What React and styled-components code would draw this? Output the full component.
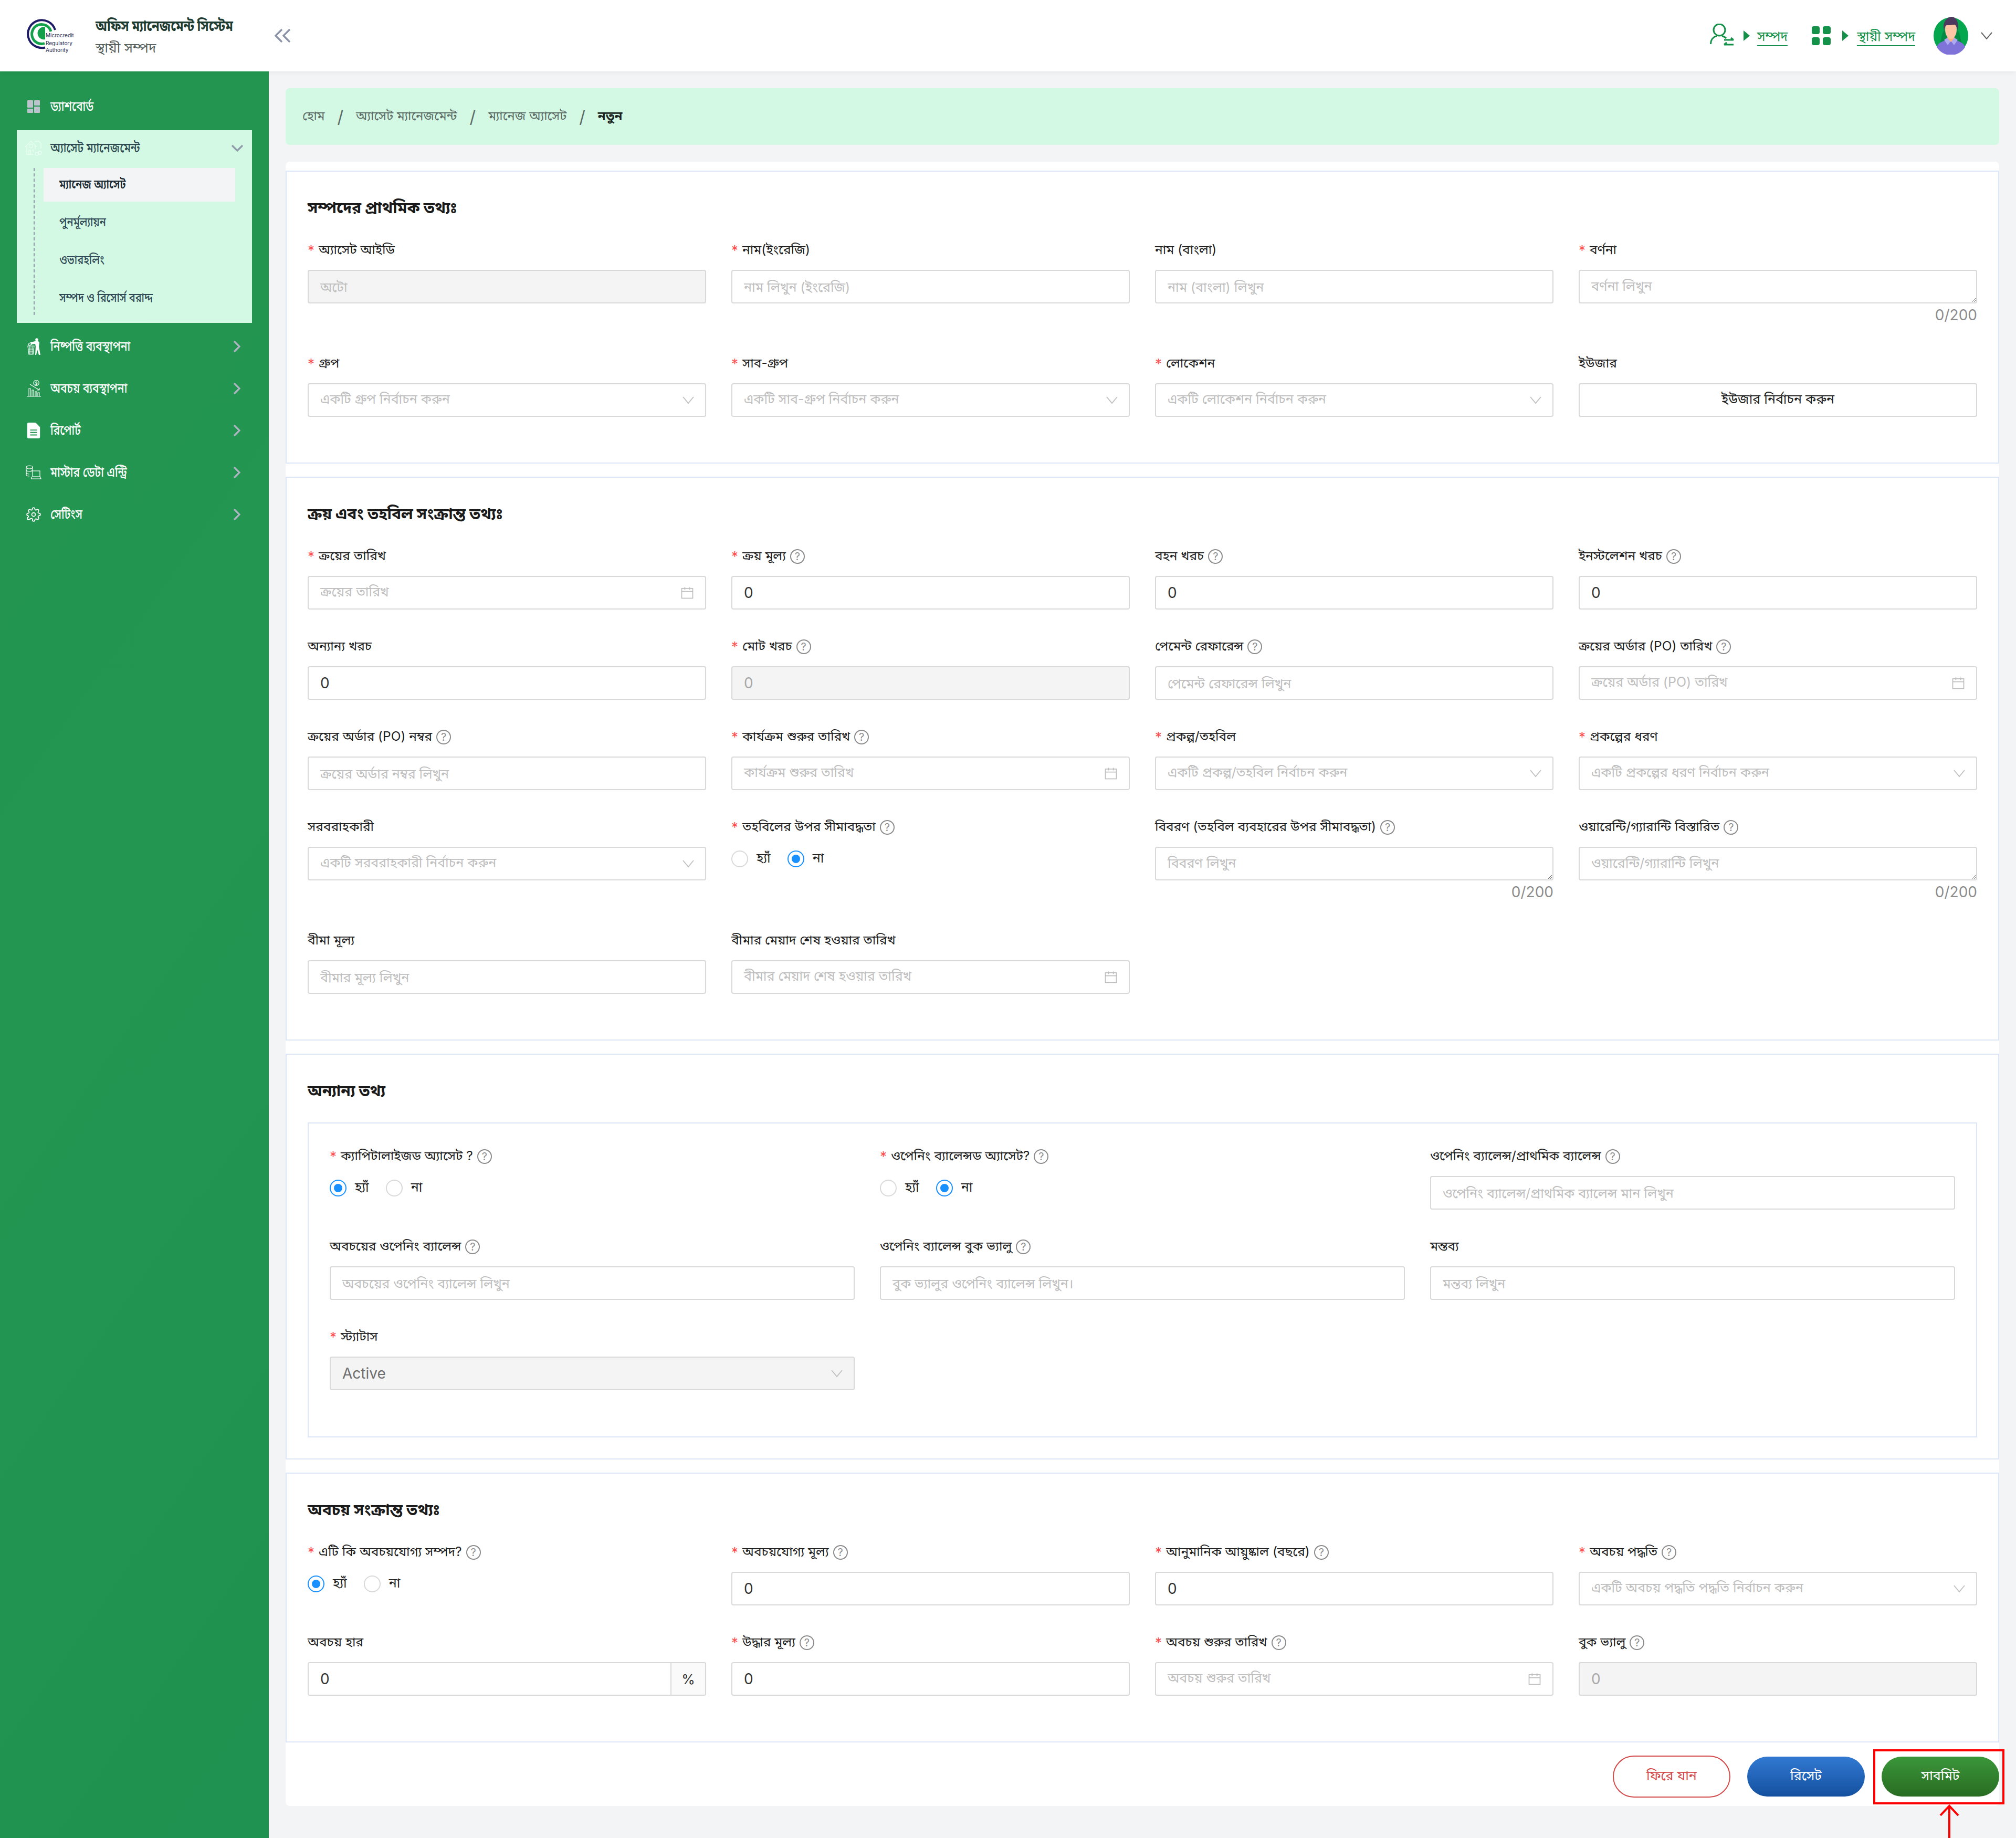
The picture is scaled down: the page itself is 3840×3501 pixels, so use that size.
import React from 'react';
import styled, { createGlobalStyle } from 'styled-components';

const Global = createGlobalStyle`
  html, body { margin: 0; padding: 0; }
  body { background: #f2f4f6; font-family: "Inter", "Noto Sans Bengali", "Noto Sans", sans-serif; }
  * { box-sizing: border-box; }
`;
const Shell = styled.div`
  width: 3840px; height: 3501px; display: flex; flex-direction: column; background: #f2f4f6; overflow: hidden; position: relative;
`;
const Header = styled.header`
  height: 136px; flex: none; background: #fff; display: flex; align-items: center; padding: 0 45px 0 48px;
  box-shadow: 0 2px 8px rgba(0,0,0,.06); position: relative; z-index: 2;
`;
const Brand = styled.div`
  display: flex; flex-direction: column; margin-left: 42px; width: 342px;
`;
const Narrow = styled.span`
  display: inline-block; white-space: nowrap; transform: scaleX(${p => p.$x}); transform-origin: 0 50%;
`;
const BrandTitle = styled.div`
  font-size: 29px; line-height: 44px; color: #1d3b30; font-weight: 700; white-space: nowrap; padding-top: 2px;
`;
const BrandSub = styled.div`
  font-size: 26px; line-height: 40px; color: #55605c; white-space: nowrap;
`;
const Spacer = styled.div`flex: 1;`;
const TopLink = styled.a`
  font-size: 25px; line-height: 34px; padding-top: 4px; color: #15924a; border-bottom: 2px solid #15924a; white-space: nowrap; margin-left: ${p => p.$ml}px;
`;
const TopGroup = styled.div`
  display: flex; align-items: center; margin-right: ${p => p.$mr || 0}px;
`;
const Caret = styled.span`
  width: 0; height: 0; border-top: 10px solid transparent; border-bottom: 10px solid transparent; border-left: 12px solid #15924a; margin-left: ${p => p.$ml}px;
`;
const Body = styled.div`flex: 1; display: flex; min-height: 0;`;
const Side = styled.aside`
  width: 512px; flex: none; padding: 35px 32px 0;
  background: linear-gradient(125deg, #239550 0%, #239652 50%, #1f9150 100%);
`;
const MenuItem = styled.div`
  height: 64px; display: flex; align-items: center; color: ${p => p.$dark ? '#2d4a50' : '#fff'}; font-size: 26px; font-weight: 500;
  margin-bottom: ${p => p.$mb ?? 16}px; padding-right: 16px;
`;
const MenuIcon = styled.span`
  width: 64px; flex: none; display: flex; justify-content: center; align-items: center;
`;
const MenuText = styled.span`
  flex: 1; white-space: nowrap; padding-top: 2px; transform: scaleX(.81); transform-origin: 0 50%;
`;
const SubBox = styled.div`
  background: #d3f8e3; padding: 2px 0 15px; margin-bottom: 13px;
`;
const SubList = styled.div`
  margin: 6px 32px 0 32px; padding-left: 17px; border-left: 2px dashed #8c9aa6; display: flex; flex-direction: column; gap: 8px;
`;
const SubItem = styled.div`
  height: 64px; display: flex; align-items: center; padding-left: 30px; font-size: 24px; font-weight: ${p => p.$active ? 600 : 500};
  color: ${p => p.$active ? '#1b2a33' : '#2f4a55'}; background: ${p => p.$active ? '#f2f4f6' : 'transparent'}; white-space: nowrap;
`;
const Main = styled.main`flex: 1; min-width: 0; padding: 32px 32px 0;`;
const Crumbs = styled.nav`
  height: 108px; background: #d3f8e3; border-radius: 8px; display: flex; align-items: center; padding: 0 32px; margin-bottom: 32px;
  font-size: 24px; color: #5c6b66; white-space: nowrap;
`;
const CrumbSep = styled.span`margin: 0 24px; font: 32px "Inter", sans-serif; color: #5c6b66;`;
const CrumbNow = styled.span`color: #1b2421; font-weight: 700;`;
const Sheet = styled.div`
  background: #fff; border-radius: 8px; padding-top: 17px; height: 3132px; display: flex; flex-direction: column; gap: 25px;
`;
const Section = styled.section`
  border: 2px solid #dce6f6; padding: ${p => p.$top || 127}px 40px 39px; position: relative; background: #fff;
`;
const SectionTitle = styled.h2`
  position: absolute; left: 40px; top: 44px; margin: 0; font-size: 30px; line-height: 48px; font-weight: 700; color: #1a1a1a; white-space: nowrap;
`;
const Grid = styled.div`
  display: grid; grid-template-columns: repeat(${p => p.$cols || 4}, 1fr); column-gap: 48px; align-items: start;
`;
const Panel = styled.div`
  border: 2px solid #dce6f6; padding: 40px; margin-bottom: 1px;
`;
const Field = styled.div`margin-bottom: 48px; min-width: 0;`;
const Label = styled.label`
  display: flex; align-items: center; height: 46px; margin-bottom: 14px; font-size: 24.5px; color: #1f1f1f; white-space: nowrap;
`;
const Req = styled.span`
  color: #ff4d4f; font-family: "Inter", sans-serif; font-size: 26px; margin-right: 8px; line-height: 1;
`;
const Help = styled.span`
  width: 28px; height: 28px; border: 2px solid #8c8c8c; border-radius: 50%; color: #8c8c8c; font: 20px/24px "Inter", sans-serif; text-align: center; margin-left: 8px; flex: none;
`;
const TextInput = styled.input`
  display: block; width: 100%; height: 64px; border: 2px solid #d9d9d9; border-radius: 4px; padding: 0 22px; font: 28px "Inter", "Noto Sans Bengali", sans-serif; color: #333;
  background: ${p => p.$off ? '#f4f4f4' : '#fff'}; outline: none;
  &::placeholder { color: #bfbfbf; font-size: 25px; opacity: 1; }
  &:disabled { color: #a8a8a8; }
`;
const Area = styled.textarea`
  display: block; width: 100%; height: 64px; border: 2px solid #d9d9d9; border-radius: 4px; padding: 14px 22px 0; font: 25px "Inter", "Noto Sans Bengali", sans-serif; resize: vertical; background: #fff; outline: none;
  &::placeholder { color: #bfbfbf; opacity: 1; }
`;
const Count = styled.div`
  height: 44px; text-align: right; font: 28px/44px "Inter", sans-serif; color: #8c8c8c;
`;
const Box = styled.div`
  height: 64px; border: 2px solid #d9d9d9; border-radius: 4px; display: flex; align-items: center; padding: 0 20px 0 22px; justify-content: space-between;
  background: ${p => p.$off ? '#f4f4f4' : '#fff'};
`;
const Ph = styled.span`
  color: ${p => p.$strong ? '#6e6e6e' : '#bfbfbf'}; font-size: ${p => p.$strong ? 28 : 25}px; white-space: nowrap;
`;
const UserBtn = styled.div`
  height: 64px; border: 2px solid #d9d9d9; border-radius: 4px; display: flex; align-items: center; justify-content: center; font-size: 25px; color: #222; background: #fff;
`;
const AddOn = styled.div`
  display: flex; height: 64px; border: 2px solid #d9d9d9; border-radius: 4px; overflow: hidden;
`;
const AddOnInput = styled.input`
  flex: 1; min-width: 0; border: 0; padding: 0 22px; font: 28px "Inter", sans-serif; color: #333; outline: none;
`;
const AddOnTail = styled.div`
  width: 66px; border-left: 2px solid #d9d9d9; background: #fafafa; display: flex; align-items: center; justify-content: center; font: 26px "Inter", sans-serif; color: #333;
`;
const Radios = styled.div`display: flex; align-items: center; height: 32px; margin-top: 21px;`;
const RadioDot = styled.span`
  width: 32px; height: 32px; border-radius: 50%; border: 2px solid ${p => p.$on ? '#1890ff' : '#d9d9d9'}; display: flex; align-items: center; justify-content: center; flex: none;
  &::after { content: ''; width: 16px; height: 16px; border-radius: 50%; background: ${p => p.$on ? '#1890ff' : 'transparent'}; }
`;
const RadioText = styled.span`font-size: 25px; color: #222; margin: 0 32px 0 16px; white-space: nowrap;`;
const Foot = styled.div`
  flex: 1; display: flex; align-items: center; justify-content: flex-end; gap: 32px; padding-bottom: 16px;
`;
const Pill = styled.button`
  width: 224px; height: ${p => p.$v === 'back' ? 80 : 76}px; border-radius: 40px; border: ${p => p.$v === 'back' ? '2px solid #d24a4a' : 0}; font: 25px "Inter", "Noto Sans Bengali", sans-serif;
  color: ${p => p.$v === 'back' ? '#d24a4a' : '#fff'};
  background: ${p => p.$v === 'back' ? '#fff' : p.$v === 'reset' ? 'linear-gradient(180deg,#3179d2,#14509f)' : 'linear-gradient(180deg,#3a963a,#296c22)'};
`;
const Mark = styled.div`
  position: absolute; left: 3568px; top: 3332px; width: 250px; height: 105px; border: 4px solid #ff0000; z-index: 5;
`;
const Arrow = styled.svg`position: absolute; left: 3690px; top: 3436px; z-index: 5;`;
const ChevWrap = styled.span`margin-left: 24px; display: flex;`;

const Chev = () => (
  <svg width="24" height="16" viewBox="0 0 24 16" fill="none" stroke="#bfbfbf" strokeWidth="1.8"><path d="M2 2l10 12L22 2" /></svg>
);
const Cal = () => (
  <svg width="28" height="28" viewBox="0 0 24 24" fill="none" stroke="#bfbfbf" strokeWidth="1.5"><rect x="3" y="5" width="18" height="16" /><path d="M3 10h18M8 3v4M16 3v4" /></svg>
);
const Logo = () => (
  <svg width="92" height="66" viewBox="0 0 92 66" style={{ flex: 'none' }}>
    <path d="M57 22A26.5 26.5 0 1 0 38 55.5" fill="none" stroke="#1d1a66" strokeWidth="4" />
    <path d="M49 25A18.5 18.5 0 1 0 37 47.5" fill="none" stroke="#13a04b" strokeWidth="5" />
    <path d="M38 16.5A12 12 0 1 0 38 40Z" fill="#13a04b" />
    <text x="39" y="36" fontFamily="Inter, sans-serif" fontSize="10" fill="#1d2a4f">Microcredit</text>
    <text x="39" y="51" fontFamily="Inter, sans-serif" fontSize="10" fill="#1d2a4f">Regulatory</text>
    <text x="39" y="64" fontFamily="Inter, sans-serif" fontSize="10" fill="#1d2a4f">Authority</text>
  </svg>
);
const Dash = () => (
  <svg width="24" height="24" viewBox="0 0 24 24" fill="#bcc3cc"><rect width="11" height="14" rx="1" /><rect x="13" width="11" height="10" rx="1" /><rect y="16" width="11" height="8" rx="1" /><rect x="13" y="12" width="11" height="12" rx="1" /></svg>
);
const Estate = () => (
  <svg width="32" height="30" viewBox="0 0 32 30" fill="none" stroke="#eafff3" strokeWidth="1.3"><path d="M0 13L11 2l11 11" /><path d="M3 12v15h12M19 10v7" /><circle cx="11" cy="11" r="3.5" /><path d="M7 19h3v8H7zM13 19h3v4" /><path d="M18 2h8l4 4v10" /><circle cx="22" cy="26" r="3" /><circle cx="28" cy="24" r="3" /></svg>
);
const Trash = () => (
  <svg width="25" height="32" viewBox="0 0 25 32" fill="#fff">
    <circle cx="18" cy="3" r="2.8" />
    <path d="M6 8l9-2h6l2 3-1 7 3 16h-3l-3-10-2 10h-2l1-16-1-5-8 1z" />
    <path d="M1 15h12l-2 16H3z" fill="none" stroke="#fff" strokeWidth="1.2" />
    <path d="M4.5 16v14M7 16v14M9.5 16v14M2 21h10M2.5 26h9" stroke="#fff" strokeWidth=".8" />
    <ellipse cx="6" cy="11" rx="4" ry="2" transform="rotate(-25 6 11)" fill="none" stroke="#fff" strokeWidth="1.2" />
  </svg>
);
const Decline = () => (
  <svg width="27" height="32" viewBox="0 0 27 32" fill="none" stroke="#fff" strokeWidth="1.1">
    <circle cx="18" cy="5.5" r="5.2" />
    <text x="18" y="8.5" textAnchor="middle" fontFamily="Inter, sans-serif" fontSize="8" fill="#fff" stroke="none">$</text>
    <path d="M6 8l18 11M24 19v-4M24 19h-4M0 31h27M4 31V16h3v15M10 31V19h3v12M16 31V22h3v9M21 31V24h3v7" />
  </svg>
);
const Doc = () => (
  <svg width="26" height="30" viewBox="0 0 26 32"><path d="M3 0h14l9 9v20a3 3 0 0 1-3 3H3a3 3 0 0 1-3-3V3a3 3 0 0 1 3-3z" fill="#fff" /><path d="M6 15h14M6 20h14M6 25h14" stroke="#239550" strokeWidth="2" /></svg>
);
const Master = () => (
  <svg width="32" height="28" viewBox="0 0 32 28" fill="none" stroke="#fff" strokeWidth="1.2"><ellipse cx="8" cy="4" rx="6" ry="3" /><path d="M2 4v14c0 2 3 3 6 3M14 4v6M2 9c0 2 3 3 6 3s5-1 6-2M2 14c0 2 3 3 6 3" /><rect x="14" y="11" width="14" height="11" /><path d="M11 26h20M12 22v4M29 22v4" /></svg>
);
const Gear = () => (
  <svg width="28" height="28" viewBox="0 0 24 24" fill="none" stroke="#fff" strokeWidth="1.5" strokeLinejoin="round"><circle cx="12" cy="12" r="3" /><path d="M19.4 15a1.65 1.65 0 0 0 .33 1.82l.06.06a2 2 0 1 1-2.83 2.83l-.06-.06a1.65 1.65 0 0 0-2.82 1.17V21a2 2 0 0 1-4 0v-.09A1.65 1.65 0 0 0 7 19.4a1.65 1.65 0 0 0-1.82.33l-.06.06a2 2 0 1 1-2.83-2.83l.06-.06A1.65 1.65 0 0 0 3.09 14H3a2 2 0 0 1 0-4h.09A1.65 1.65 0 0 0 4.6 9a1.65 1.65 0 0 0-.33-1.82l-.06-.06a2 2 0 1 1 2.83-2.83l.06.06A1.65 1.65 0 0 0 9 4.6 1.65 1.65 0 0 0 10 3.09V3a2 2 0 0 1 4 0v.09a1.65 1.65 0 0 0 1 1.51 1.65 1.65 0 0 0 1.82-.33l.06-.06a2 2 0 1 1 2.83 2.83l-.06.06A1.65 1.65 0 0 0 19.4 9a1.65 1.65 0 0 0 1.51 1H21a2 2 0 0 1 0 4h-.09a1.65 1.65 0 0 0-1.51 1z" /></svg>
);
const SideChev = ({ open }) => (
  <svg width="24" height="24" viewBox="0 0 24 24" fill="none" stroke={open ? '#8f9bab' : '#aeb4c2'} strokeWidth="3.2"><path d={open ? 'M2 7l10 10L22 7' : 'M6 2l10 10L6 22'} /></svg>
);
const Avatar = () => (
  <svg width="66" height="72" viewBox="0 0 66 72" style={{ flex: 'none' }}>
    <ellipse cx="33" cy="36" rx="33" ry="35" fill="#04a64e" />
    <path d="M12 50c4-8 2-16 8-24h26c6 8 4 16 8 24l-8 6H20z" fill="#058a44" />
    <path d="M6 58c2-9 12-12 27-16 15 4 25 7 27 16a33 35 0 0 1-54 0z" fill="#7f72d8" />
    <path d="M26 40l-6 4 7 10 6-8 6 8 7-10-6-4z" fill="#aeaaf2" />
    <path d="M26 40l7 8 7-8-3-8H29z" fill="#ffb27f" />
    <ellipse cx="33" cy="24" rx="11" ry="18" fill="#ffc6a6" />
    <path d="M20 26C16 10 26 0 34 0s15 8 12 26c-2-6-3-10-6-11-6 1-12 1-15 1-3 1-4 5-5 10z" fill="#4d3a5e" />
  </svg>
);

const Fld = ({ label, req, help, children }) => (
  <Field>
    <Label>{req && <Req>*</Req>}{label}{help && <Help>?</Help>}</Label>
    {children}
  </Field>
);
const Sel = ({ ph }) => <Box><Ph>{ph}</Ph><Chev /></Box>;
const DateF = ({ ph }) => <Box><Ph>{ph}</Ph><Cal /></Box>;
const Yn = ({ yes }) => (
  <Radios>
    <RadioDot $on={yes} /><RadioText>হ্যাঁ</RadioText>
    <RadioDot $on={!yes} /><RadioText>না</RadioText>
  </Radios>
);

export default function App() {
  return (
    <Shell>
      <Global />
      <Header>
        <Logo />
        <Brand>
          <BrandTitle><Narrow $x={0.82}>অফিস ম্যানেজমেন্ট সিস্টেম</Narrow></BrandTitle>
          <BrandSub>স্থায়ী সম্পদ</BrandSub>
        </Brand>
        <svg width="33" height="30" viewBox="0 0 33 30" fill="none" stroke="#8a92a6" strokeWidth="3.4" style={{ marginLeft: -2 }}><path d="M15 3L3 15l12 12M30 3L18 15l12 12" /></svg>
        <Spacer />
        <TopGroup $mr={46}>
          <svg width="46" height="46" viewBox="0 0 46 46" fill="none" stroke="#15924a" strokeWidth="3"><circle cx="18" cy="12" r="11" /><path d="M1.5 39C1.5 30 7 25 13 23.5M23 23.5c3 1 6 2 8 4.5" /><path d="M27 31h18M40 27l5 4M27 40h18M32 36l-5 4" /></svg>
          <Caret $ml={18} />
          <TopLink $ml={14}>সম্পদ</TopLink>
        </TopGroup>
        <TopGroup $mr={35}>
          <svg width="36" height="36" viewBox="0 0 36 36" fill="#15924a"><rect width="15" height="15" rx="4" /><rect x="21" width="15" height="15" rx="4" /><rect y="21" width="15" height="15" rx="4" /><rect x="21" y="21" width="15" height="15" rx="4" /></svg>
          <Caret $ml={22} />
          <TopLink $ml={16}>স্থায়ী সম্পদ</TopLink>
        </TopGroup>
        <Avatar />
        <ChevWrap><svg width="22" height="14" viewBox="0 0 22 14" fill="none" stroke="#666" strokeWidth="2"><path d="M1 1l10 12L21 1" /></svg></ChevWrap>
      </Header>
      <Body>
        <Side>
          <MenuItem $mb={13}><MenuIcon><Dash /></MenuIcon><MenuText>ড্যাশবোর্ড</MenuText></MenuItem>
          <SubBox>
            <MenuItem $dark $mb={0}><MenuIcon><Estate /></MenuIcon><MenuText>অ্যাসেট ম্যানেজমেন্ট</MenuText><SideChev open /></MenuItem>
            <SubList>
              <SubItem $active><Narrow $x={0.83}>ম্যানেজ অ্যাসেট</Narrow></SubItem>
              <SubItem><Narrow $x={0.83}>পুনর্মূল্যায়ন</Narrow></SubItem>
              <SubItem><Narrow $x={0.83}>ওভারহলিং</Narrow></SubItem>
              <SubItem><Narrow $x={0.83}>সম্পদ ও রিসোর্স বরাদ্দ</Narrow></SubItem>
            </SubList>
          </SubBox>
          <MenuItem><MenuIcon><Trash /></MenuIcon><MenuText>নিষ্পত্তি ব্যবস্থাপনা</MenuText><SideChev /></MenuItem>
          <MenuItem><MenuIcon><Decline /></MenuIcon><MenuText>অবচয় ব্যবস্থাপনা</MenuText><SideChev /></MenuItem>
          <MenuItem><MenuIcon><Doc /></MenuIcon><MenuText>রিপোর্ট</MenuText><SideChev /></MenuItem>
          <MenuItem><MenuIcon><Master /></MenuIcon><MenuText>মাস্টার ডেটা এন্ট্রি</MenuText><SideChev /></MenuItem>
          <MenuItem><MenuIcon><Gear /></MenuIcon><MenuText>সেটিংস</MenuText><SideChev /></MenuItem>
        </Side>
        <Main>
          <Crumbs>
            <span>হোম</span><CrumbSep>/</CrumbSep>
            <span>অ্যাসেট ম্যানেজমেন্ট</span><CrumbSep>/</CrumbSep>
            <span>ম্যানেজ অ্যাসেট</span><CrumbSep>/</CrumbSep>
            <CrumbNow>নতুন</CrumbNow>
          </Crumbs>
          <Sheet>
            <Section>
              <SectionTitle>সম্পদের প্রাথমিক তথ্যঃ</SectionTitle>
              <Grid>
                <Fld req label="অ্যাসেট আইডি"><TextInput $off disabled placeholder="অটো" /></Fld>
                <Fld req label="নাম(ইংরেজি)"><TextInput placeholder="নাম লিখুন (ইংরেজি)" /></Fld>
                <Fld label="নাম (বাংলা)"><TextInput placeholder="নাম (বাংলা) লিখুন" /></Fld>
                <Fld req label="বর্ণনা"><Area placeholder="বর্ণনা লিখুন" /><Count>0/200</Count></Fld>
                <Fld req label="গ্রুপ"><Sel ph="একটি গ্রুপ নির্বাচন করুন" /></Fld>
                <Fld req label="সাব-গ্রুপ"><Sel ph="একটি সাব-গ্রুপ নির্বাচন করুন" /></Fld>
                <Fld req label="লোকেশন"><Sel ph="একটি লোকেশন নির্বাচন করুন" /></Fld>
                <Fld label="ইউজার"><UserBtn>ইউজার নির্বাচন করুন</UserBtn></Fld>
              </Grid>
            </Section>
            <Section>
              <SectionTitle>ক্রয় এবং তহবিল সংক্রান্ত তথ্যঃ</SectionTitle>
              <Grid>
                <Fld req label="ক্রয়ের তারিখ"><DateF ph="ক্রয়ের তারিখ" /></Fld>
                <Fld req help label="ক্রয় মূল্য"><TextInput defaultValue="0" /></Fld>
                <Fld help label="বহন খরচ"><TextInput defaultValue="0" /></Fld>
                <Fld help label="ইনস্টলেশন খরচ"><TextInput defaultValue="0" /></Fld>
                <Fld label="অন্যান্য খরচ"><TextInput defaultValue="0" /></Fld>
                <Fld req help label="মোট খরচ"><TextInput $off disabled defaultValue="0" /></Fld>
                <Fld help label="পেমেন্ট রেফারেন্স"><TextInput placeholder="পেমেন্ট রেফারেন্স লিখুন" /></Fld>
                <Fld help label="ক্রয়ের অর্ডার (PO) তারিখ"><DateF ph="ক্রয়ের অর্ডার (PO) তারিখ" /></Fld>
                <Fld help label="ক্রয়ের অর্ডার (PO) নম্বর"><TextInput placeholder="ক্রয়ের অর্ডার নম্বর লিখুন" /></Fld>
                <Fld req help label="কার্যক্রম শুরুর তারিখ"><DateF ph="কার্যক্রম শুরুর তারিখ" /></Fld>
                <Fld req label="প্রকল্প/তহবিল"><Sel ph="একটি প্রকল্প/তহবিল নির্বাচন করুন" /></Fld>
                <Fld req label="প্রকল্পের ধরণ"><Sel ph="একটি প্রকল্পের ধরণ নির্বাচন করুন" /></Fld>
                <Fld label="সরবরাহকারী"><Sel ph="একটি সরবরাহকারী নির্বাচন করুন" /></Fld>
                <Fld req help label="তহবিলের উপর সীমাবদ্ধতা"><Yn /></Fld>
                <Fld help label="বিবরণ (তহবিল ব্যবহারের উপর সীমাবদ্ধতা)"><Area placeholder="বিবরণ লিখুন" /><Count>0/200</Count></Fld>
                <Fld help label="ওয়ারেন্টি/গ্যারান্টি বিস্তারিত"><Area placeholder="ওয়ারেন্টি/গ্যারান্টি লিখুন" /><Count>0/200</Count></Fld>
                <Fld label="বীমা মূল্য"><TextInput placeholder="বীমার মূল্য লিখুন" /></Fld>
                <Fld label="বীমার মেয়াদ শেষ হওয়ার তারিখ"><DateF ph="বীমার মেয়াদ শেষ হওয়ার তারিখ" /></Fld>
              </Grid>
            </Section>
            <Section $top={129}>
              <SectionTitle>অন্যান্য তথ্য</SectionTitle>
              <Panel>
                <Grid $cols={3}>
                  <Fld req help label="ক্যাপিটালাইজড অ্যাসেট ?"><Yn yes /></Fld>
                  <Fld req help label="ওপেনিং ব্যালেন্সড অ্যাসেট?"><Yn /></Fld>
                  <Fld help label="ওপেনিং ব্যালেন্স/প্রাথমিক ব্যালেন্স"><TextInput placeholder="ওপেনিং ব্যালেন্স/প্রাথমিক ব্যালেন্স মান লিখুন" /></Fld>
                  <Fld help label="অবচয়ের ওপেনিং ব্যালেন্স"><TextInput placeholder="অবচয়ের ওপেনিং ব্যালেন্স লিখুন" /></Fld>
                  <Fld help label="ওপেনিং ব্যালেন্স বুক ভ্যালু"><TextInput placeholder="বুক ভ্যালুর ওপেনিং ব্যালেন্স লিখুন।" /></Fld>
                  <Fld label="মন্তব্য"><TextInput placeholder="মন্তব্য লিখুন" /></Fld>
                  <Fld req label="স্ট্যাটাস"><Box $off><Ph $strong>Active</Ph><Chev /></Box></Fld>
                </Grid>
              </Panel>
            </Section>
            <Section>
              <SectionTitle>অবচয় সংক্রান্ত তথ্যঃ</SectionTitle>
              <Grid>
                <Fld req help label="এটি কি অবচয়যোগ্য সম্পদ?"><Yn yes /></Fld>
                <Fld req help label="অবচয়যোগ্য মূল্য"><TextInput defaultValue="0" /></Fld>
                <Fld req help label="আনুমানিক আয়ুষ্কাল (বছরে)"><TextInput defaultValue="0" /></Fld>
                <Fld req help label="অবচয় পদ্ধতি"><Sel ph="একটি অবচয় পদ্ধতি পদ্ধতি নির্বাচন করুন" /></Fld>
                <Fld label="অবচয় হার"><AddOn><AddOnInput defaultValue="0" /><AddOnTail>%</AddOnTail></AddOn></Fld>
                <Fld req help label="উদ্ধার মূল্য"><TextInput defaultValue="0" /></Fld>
                <Fld req help label="অবচয় শুরুর তারিখ"><DateF ph="অবচয় শুরুর তারিখ" /></Fld>
                <Fld help label="বুক ভ্যালু"><TextInput $off disabled defaultValue="0" /></Fld>
              </Grid>
            </Section>
            <Foot>
              <Pill $v="back">ফিরে যান</Pill>
              <Pill $v="reset">রিসেট</Pill>
              <Pill $v="submit">সাবমিট</Pill>
            </Foot>
          </Sheet>
        </Main>
      </Body>
      <Mark />
      <Arrow width="46" height="66" viewBox="0 0 46 66" fill="none" stroke="#ff0000" strokeWidth="4"><path d="M23 66L23 4M6 22L23 4l17 18" /></Arrow>
    </Shell>
  );
}
